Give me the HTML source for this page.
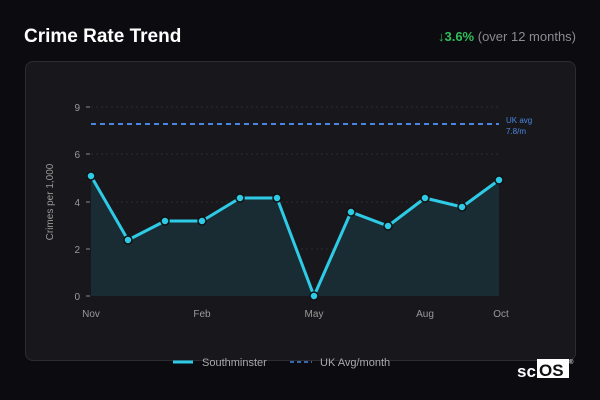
<!DOCTYPE html><html><head><style>
body{margin:0;width:600px;height:400px;background:#0c0b10;font-family:"Liberation Sans","DejaVu Sans",sans-serif;overflow:hidden;position:relative}
.t{position:absolute;left:24px;top:26px;color:#fff;font-weight:bold;font-size:19px}
.r{position:absolute;right:24px;top:29px;color:#8a8a92;font-size:13px}
.r b{color:#2fbf5a}
.card{position:absolute;left:25px;top:61px;width:549px;height:298px;background:#18181c;border:1px solid #2c2c32;border-radius:8px}
</style></head><body>
<div class="t">Crime Rate Trend</div>
<div class="r"><b>↓3.6%</b> (over 12 months)</div>
<div class="card"></div>
<svg style="position:absolute;left:0;top:0" width="600" height="400" font-family="Liberation Sans,DejaVu Sans,sans-serif">
<g stroke="#2a2a30" stroke-dasharray="2,3"><line x1="91" y1="107" x2="499" y2="107"/><line x1="91" y1="154" x2="499" y2="154"/><line x1="91" y1="202" x2="499" y2="202"/><line x1="91" y1="249" x2="499" y2="249"/></g>
<g stroke="#888"><line x1="86" y1="107" x2="90" y2="107"/><line x1="86" y1="154" x2="90" y2="154"/><line x1="86" y1="202" x2="90" y2="202"/><line x1="86" y1="249" x2="90" y2="249"/><line x1="86" y1="296" x2="90" y2="296"/></g>
<g fill="#999" font-size="10" text-anchor="end"><text x="80" y="111">9</text><text x="80" y="158">6</text><text x="80" y="206">4</text><text x="80" y="253">2</text><text x="80" y="300">0</text></g>
<g fill="#999" font-size="10" text-anchor="middle"><text x="91" y="317">Nov</text><text x="202" y="317">Feb</text><text x="314" y="317">May</text><text x="425" y="317">Aug</text><text x="501" y="317">Oct</text></g>
<text transform="translate(53,202) rotate(-90)" fill="#999" font-size="10" text-anchor="middle">Crimes per 1,000</text>
<line x1="91" y1="124" x2="499" y2="124" stroke="#4a86e0" stroke-width="2" stroke-dasharray="5,4"/>
<text x="506" y="123" fill="#4a86e0" font-size="8">UK avg</text><text x="506" y="134" fill="#4a86e0" font-size="8">7.8/m</text>
<polygon fill="#1a2c33" points="91,296 91,176 128,240 165,221 202,221 240,198 277,198 314,296 351,212 388,226 425,198 462,207 499,180 499,296"/>
<polyline fill="none" stroke="#2ecbe6" stroke-width="3" stroke-linejoin="round" points="91,176 128,240 165,221 202,221 240,198 277,198 314,296 351,212 388,226 425,198 462,207 499,180"/>
<g fill="#2ecbe6" stroke="#111" stroke-width="1.5"><circle cx="91" cy="176" r="4"/><circle cx="128" cy="240" r="4"/><circle cx="165" cy="221" r="4"/><circle cx="202" cy="221" r="4"/><circle cx="240" cy="198" r="4"/><circle cx="277" cy="198" r="4"/><circle cx="314" cy="296" r="4"/><circle cx="351" cy="212" r="4"/><circle cx="388" cy="226" r="4"/><circle cx="425" cy="198" r="4"/><circle cx="462" cy="207" r="4"/><circle cx="499" cy="180" r="4"/></g>
<line x1="173" y1="362" x2="193" y2="362" stroke="#2ecbe6" stroke-width="3"/>
<text x="202" y="366" fill="#aaa" font-size="11">Southminster</text>
<line x1="290" y1="362" x2="312" y2="362" stroke="#4a86e0" stroke-width="1.5" stroke-dasharray="4,3"/>
<text x="320" y="366" fill="#aaa" font-size="11">UK Avg/month</text>
<text x="517" y="377" fill="#fff" font-size="17" font-weight="bold">sc</text>
<rect x="537" y="359" width="32" height="19" fill="#fff"/>
<text x="539" y="376" fill="#111" font-size="17" font-weight="bold">OS</text>
<text x="569" y="364" fill="#fff" font-size="6">®</text>
</svg>
</body></html>
